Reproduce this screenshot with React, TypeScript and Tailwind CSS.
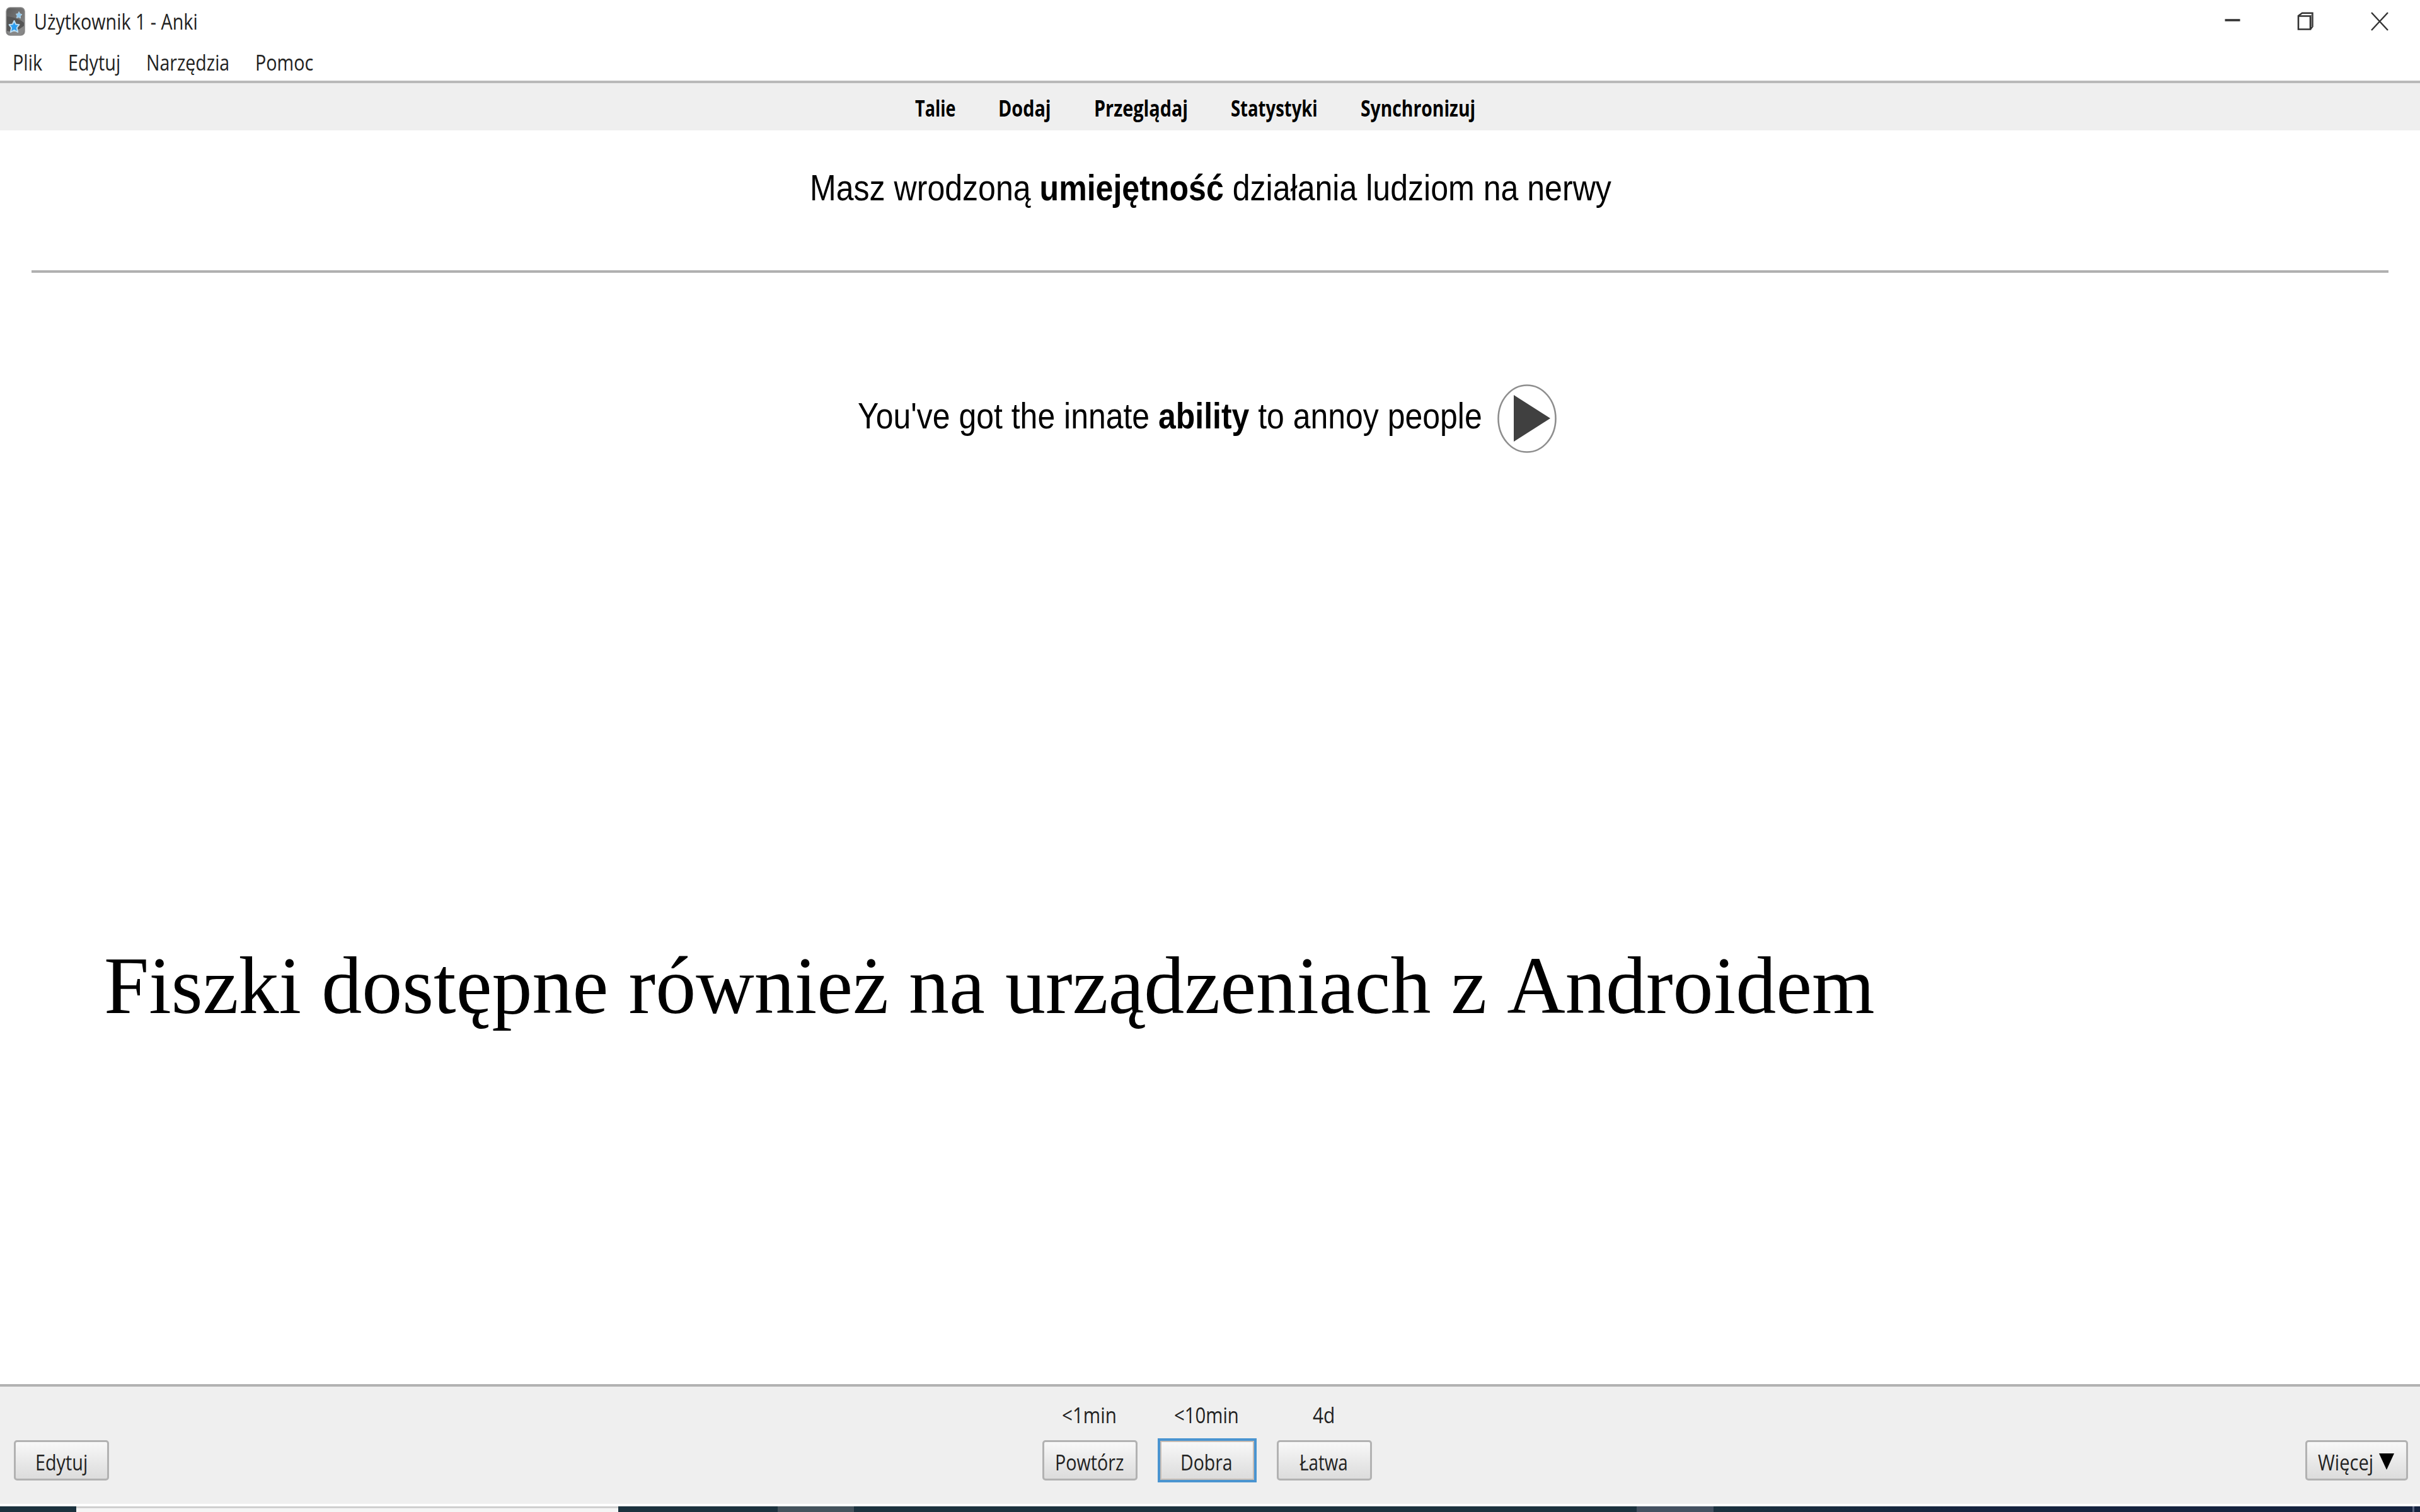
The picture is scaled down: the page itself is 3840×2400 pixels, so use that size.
import { useLayoutEffect, useRef, useState } from 'react';
import type { ReactNode } from 'react';

const uiFont = "font-['Open_Sans','Noto_Sans',sans-serif]";

// One line of text, condensed horizontally to fill exactly `w` pixels.
function Fit({ w, children }: { w: number; children: ReactNode }) {
  const ref = useRef<HTMLSpanElement>(null);
  const [scale, setScale] = useState(1);

  useLayoutEffect(() => {
    if (ref.current) setScale(w / ref.current.offsetWidth);
  }, [w]);

  return (
    <span className="block shrink-0 whitespace-nowrap" style={{ width: w }}>
      <span
        ref={ref}
        className="inline-block origin-left whitespace-nowrap align-top"
        style={{ transform: `scaleX(${scale})` }}
      >
        {children}
      </span>
    </span>
  );
}

function AnkiIcon() {
  return (
    <svg width="32" height="46" viewBox="0 0 32 46" className="shrink-0">
      <defs>
        <linearGradient id="tile" x1="0" y1="0" x2="1" y2="1">
          <stop offset="0" stopColor="#5a5a5a" />
          <stop offset="1" stopColor="#8e8e8e" />
        </linearGradient>
      </defs>
      <rect x="1" y="1" width="29" height="44" rx="6" fill="url(#tile)" stroke="#8a8a8a" strokeWidth="1.5" />
      <path d="M2 15 C12 16 22 19 29 25 V38 Q29 44 23 44 H8 Q2 44 2 38 Z" fill="#555" />
      <path d="M2 38 Q14 42 29 30 V38 Q29 44 23 44 H8 Q2 44 2 38 Z" fill="#888" />
      <path
        d="M13.5 22 L16.2 27.6 L21.5 28.2 L17.8 33 L19.2 40 L13.5 36.8 L7.8 40 L9.2 33 L5.5 28.2 L10.8 27.6 Z"
        fill="#2b9df0"
        stroke="#b9dcf3"
        strokeWidth="2"
        strokeLinejoin="round"
      />
      <path
        d="M21 7.5 L22.8 10.8 L26 12 L23.4 14.4 L23.6 18 L20.6 16.4 L17.4 17.6 L18.2 14 L16.4 11.2 L19.6 10.8 Z"
        fill="#8cc8f0"
        stroke="#b5cfdf"
        strokeWidth="1"
        strokeLinejoin="round"
      />
    </svg>
  );
}

function TitleBar() {
  return (
    <div className="flex h-[67px] items-center justify-between pr-[49px] pl-[9px] text-[35px] leading-[67px] text-[#222]">
      <div className="flex items-center gap-[13px]">
        <AnkiIcon />
        <Fit w={260}>Użytkownik 1 - Anki</Fit>
      </div>
      <svg width="262" height="34" viewBox="0 0 262 34" fill="none" stroke="#333" strokeWidth="2.6">
        <path d="M1.5 15 H25.5" strokeWidth="3.6" />
        <path d="M118 8.5 H137 V29.5 H118 Z" />
        <path d="M118 8 L124 3.8 H140.5 V25 L137.5 29" strokeWidth="2.4" />
        <path d="M139 6 V26" stroke="#777" strokeWidth="2" />
        <path d="M234 3 L260 31 M260 3 L234 31" strokeWidth="2.4" />
      </svg>
    </div>
  );
}

const menus = [
  { label: 'Plik', w: 47 },
  { label: 'Edytuj', w: 83 },
  { label: 'Narzędzia', w: 132 },
  { label: 'Pomoc', w: 92 },
];

function MenuBar() {
  return (
    <div className="flex h-[61px] gap-[41px] pl-[20px] text-[35px] leading-[63px] text-[#222]">
      {menus.map((m) => (
        <Fit key={m.label} w={m.w}>
          {m.label}
        </Fit>
      ))}
    </div>
  );
}

const links = [
  { label: 'Talie', w: 64 },
  { label: 'Dodaj', w: 84 },
  { label: 'Przeglądaj', w: 149 },
  { label: 'Statystyki', w: 138 },
  { label: 'Synchronizuj', w: 182 },
];

function Toolbar() {
  return (
    <div className="flex h-[79px] justify-center gap-[68px] border-t-4 border-[#b9b9b9] bg-[#efefef] pr-[47px] text-[35px] leading-[79px] font-bold text-black">
      {links.map((l) => (
        <Fit key={l.label} w={l.w}>
          {l.label}
        </Fit>
      ))}
    </div>
  );
}

function Card() {
  return (
    <div className="flex-1 font-['Liberation_Sans',Arial,sans-serif] text-[57px] leading-[80px] text-black">
      <div className="flex justify-center pt-[51px] pl-[1px]">
        <Fit w={1272}>
          Masz wrodzoną <b>umiejętność</b> działania ludziom na nerwy
        </Fit>
      </div>
      <hr className="mx-[50px] mt-[91px] border-t-4 border-[#b0b0b0]" />
      <div className="mt-[176px] flex h-[110px] justify-center gap-[24px] pr-[10px]">
        <div className="pt-[11px]">
          <Fit w={991}>
            You've got the innate <b>ability</b> to annoy people
          </Fit>
        </div>
        <svg width="94" height="110" viewBox="0 0 94 110">
          <ellipse cx="47" cy="55.5" rx="45.5" ry="53" fill="#fff" stroke="#8e8e8e" strokeWidth="2.6" />
          <path d="M26 18 L84 55 L26 92 Z" fill="#404040" />
        </svg>
      </div>
      <div className="mt-[765px] pl-[165px] font-['Liberation_Serif','Times_New_Roman',serif] text-[130px] leading-[160px] [font-kerning:none]">
        <Fit w={2810}>Fiszki dostępne również na urządzeniach z Androidem</Fit>
      </div>
    </div>
  );
}

const buttonCls =
  'flex h-[64px] justify-center border-[3px] bg-linear-to-b from-[#f8f8f8] to-[#dcdcdc] leading-[63px]';
const plainCls = 'rounded-[5px] border-[#b2b2b2]';
const focusedCls = 'border-[#c9bdb4] outline-4 -outline-offset-1 outline-[#4a94d0]';

const answers = [
  { due: '<1min', dueW: 87, label: 'Powtórz', w: 109 },
  { due: '<10min', dueW: 103, label: 'Dobra', w: 83, focused: true },
  { due: '4d', dueW: 35, label: 'Łatwa', w: 77 },
];

function AnswerBar() {
  return (
    <div className="flex h-[190px] items-end justify-between border-t-4 border-[#b2b2b2] bg-[#efefef] pr-[19px] pb-[37px] pl-[22px] text-[35px] text-[#222]">
      <button className={`${buttonCls} ${plainCls} w-[151px]`}>
        <Fit w={83}>Edytuj</Fit>
      </button>
      <div className="flex gap-[35px]">
        {answers.map((a) => (
          <div key={a.label} className="flex w-[151px] flex-col">
            <div className="flex h-[66px] justify-center pr-[2px] leading-[52px]">
              <Fit w={a.dueW}>{a.due}</Fit>
            </div>
            <button className={`${buttonCls} ${a.focused ? focusedCls : plainCls} pr-[2px]`}>
              <Fit w={a.w}>{a.label}</Fit>
            </button>
          </div>
        ))}
      </div>
      <button className={`${buttonCls} ${plainCls} w-[163px] gap-[9px] pr-[2px]`}>
        <Fit w={88}>Więcej</Fit>
        <svg width="24" height="26" viewBox="0 0 24 26" className="mt-[18px]">
          <path d="M0 0 H24 L12 26 Z" fill="#000" />
        </svg>
      </button>
    </div>
  );
}

// Top edge of the Windows taskbar, peeking out under the window.
function Taskbar() {
  return (
    <div className="flex h-[13px] border-t-4 border-white bg-linear-to-r from-[#1b323e] from-70% to-[#15233f] to-82%">
      <div className="w-[121px]" />
      <div className="w-[860px] border-t-[3px] border-[#cfcfcf] bg-[#f5f5f5]" />
      <div className="w-[253px]" />
      <div className="w-[121px] bg-[#44535d]" />
      <div className="w-[1242px]" />
      <div className="w-[122px] bg-[#445161]" />
      <div className="w-[1109px]" />
      <div className="w-[3px] bg-[#5a6480]" />
    </div>
  );
}

export default function App() {
  return (
    <div className={`flex h-[2400px] w-[3840px] flex-col overflow-hidden bg-white ${uiFont}`}>
      <TitleBar />
      <MenuBar />
      <Toolbar />
      <Card />
      <AnswerBar />
      <Taskbar />
    </div>
  );
}
